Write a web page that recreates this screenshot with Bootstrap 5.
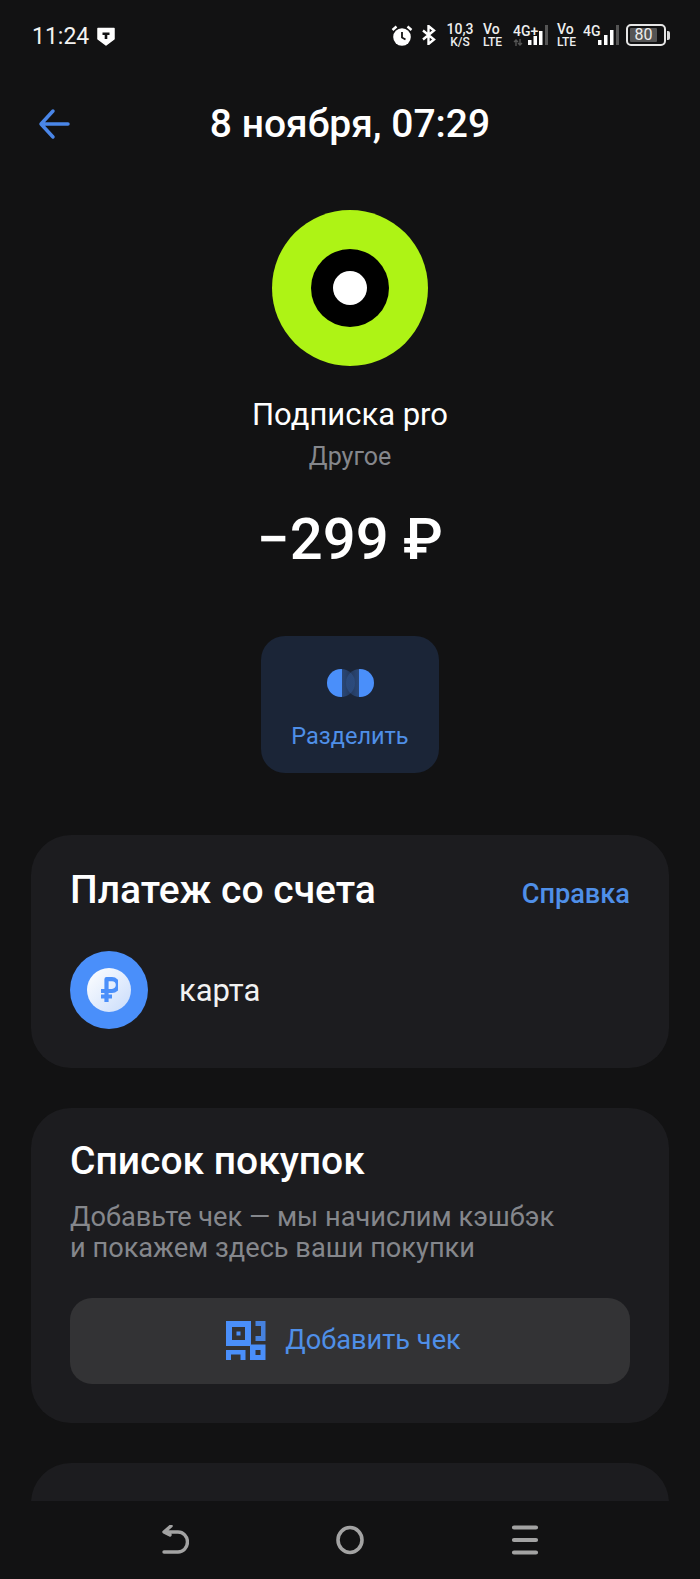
<!DOCTYPE html>
<html lang="ru">
<head>
    <meta charset="UTF-8">
    <meta name="viewport" content="width=device-width, initial-scale=1.0">
    <title>Операция</title>
    <link rel="stylesheet" href="https://cdn.jsdelivr.net/npm/bootstrap@5.3.0/dist/css/bootstrap.min.css">
    <style>
        html, body { height: 100%; }
        body {
            background: #121213;
            color: #fff;
            font-family: Roboto, "Noto Sans", sans-serif;
            overflow: hidden;
        }
        .screen { height: 1579px; }
        .scroll-area { height: 1501px; overflow: hidden; }

        .status-bar { height: 72px; padding: 0 30px 0 32px; }
        .status-time { font-size: 23px; line-height: 1; color: #f2f2f2; }
        .status-right { margin-bottom: 2px; }
        .net-speed { width: 30px; margin-left: 8px; text-align: center; font-weight: 500; color: #eee; }
        .net-volte { width: 22px; font-weight: 500; color: #eee; }
        .net-line1 { font-size: 14px; line-height: 14px; }
        .net-line2 { font-size: 12px; line-height: 12px; }
        .status-bar svg text { font-family: Roboto, sans-serif; font-weight: 500; font-size: 14px; fill: #eee; }
        .battery { width: 40px; height: 22px; border: 2px solid #e6e6e6; border-radius: 5px; padding: 2px; }
        .battery-fill { background: #555; border-radius: 1px; font-size: 16px; line-height: 14px; height: 14px; width: 27px; text-align: center; color: #eee; }
        .battery-cap { width: 3px; height: 9px; background: #ddd; border-radius: 0 2px 2px 0; margin-left: 1px; }

        .top-title { height: 104px; padding-left: 38px; }
        .top-title h1 { font-size: 39px; line-height: 46px; font-weight: 500; margin: 0; flex: 1; text-align: center; padding-right: 70px; }

        .logo-ring { width: 156px; height: 156px; border-radius: 50%; background: #aef315; margin-top: 34px; }
        .merchant { font-size: 31px; line-height: 36px; margin-top: 31px; }
        .category { font-size: 25px; line-height: 30px; color: #85878c; margin-top: 9px; }
        .amount { font-size: 58px; line-height: 64px; font-weight: 500; margin-top: 35px; }

        .split-btn { width: 178px; height: 137px; margin-top: 65px; background: #1b2537; border-radius: 24px; color: #4f8fe8; font-size: 23.500px; padding-top: 33px; }
        .split-btn span { margin-top: 25px; line-height: 28px; }

        .info-card { background: #1c1c1f; border-radius: 40px; margin: 0 31px 40px; padding: 31px 39px 39px; }
        .info-card h2 { font-size: 39px; line-height: 44px; font-weight: 500; margin: 0; }
        .help-link { font-size: 27.200px; font-weight: 500; color: #4f8fe8; text-decoration: none; margin-top: 8px; }
        .account-row { margin-top: 36px; }
        .account-ico { width: 78px; height: 78px; border-radius: 50%; background: #4a8ffa; }
        .coin { width: 44px; height: 44px; border-radius: 50%; background: linear-gradient(135deg, #fff, #c9dcfb); }
        .account-name { font-size: 31px; line-height: 36px; margin-left: 31px; padding-top: 2px; color: #f2f2f2; }
        .hint { font-size: 27.200px; line-height: 31px; color: #85878c; margin-top: 19px; }
        .check-btn { height: 86px; margin-top: 34px; padding-right: 25px; background: #333335; border: 0; border-radius: 22px; color: #4f8fe8; font-size: 27.200px; width: 100%; gap: 19px; }
        .bottom-nav { height: 78px; padding-top: 24px; color: #a3a3a3; }
        .bottom-nav svg { display: block; }
    </style>
</head>
<body>
<div class="screen d-flex flex-column">
    <div class="scroll-area">
        <div class="status-bar d-flex align-items-center justify-content-between">
            <div class="d-flex align-items-center gap-2">
                <span class="status-time">11:24</span>
                <svg width="18" height="19" viewBox="0 0 18 19"><path d="M1 1.500h16v10.500l-8 6-8-6z" fill="#fff" stroke="#fff" stroke-width="1.500" stroke-linejoin="round"/><path d="M5.500 5.500h7v2.500h-2.200v4h-2.600v-4h-2.200z" fill="#121213"/></svg>
            </div>
            <div class="status-right d-flex align-items-center">
                <svg width="22" height="21" viewBox="0 0 22 21"><circle cx="11" cy="12" r="8.800" fill="#fff"/><path d="M11 7v5.500l3.500 2" fill="none" stroke="#121213" stroke-width="1.800"/><path d="M1.500 5l4-3.500M20.500 5l-4-3.500" stroke="#fff" stroke-width="2.400"/></svg>
                <svg class="ms-2" width="16" height="20" viewBox="0 0 16 20"><path d="M2 5.500l11 9-5.500 4.500V1l5.500 4.500-11 9" fill="none" stroke="#fff" stroke-width="2.400"/></svg>
                <div class="net-speed"><div class="net-line1">10,3</div><div class="net-line2">K/S</div></div>
                <div class="net-volte ms-2"><div class="net-line1">Vo</div><div class="net-line2">LTE</div></div>
                <svg class="ms-2" width="38" height="22" viewBox="0 0 38 22"><text x="0" y="12">4G+</text><path d="M3 22v-6M1 18l2-2 2 2M7 15v6M5 19l2 2 2-2" fill="none" stroke="#555" stroke-width="1.400"/><rect x="15" y="16" width="3.500" height="5" fill="#fff"/><rect x="20.500" y="12" width="3.500" height="9" fill="#fff"/><rect x="26" y="7" width="3.500" height="14" fill="#fff"/><rect x="32" y="1" width="3" height="20" fill="#555"/></svg>
                <div class="net-volte" style="margin-left:6px"><div class="net-line1">Vo</div><div class="net-line2">LTE</div></div>
                <svg class="ms-1" width="36" height="22" viewBox="0 0 36 22"><text x="0" y="12">4G</text><rect x="15" y="16" width="3.500" height="5" fill="#fff"/><rect x="21" y="11" width="3.500" height="10" fill="#fff"/><rect x="27" y="6" width="3.500" height="15" fill="#fff"/><rect x="33" y="1" width="3" height="20" fill="#555"/></svg>
                <div class="d-flex align-items-center" style="margin-left:7px">
                    <div class="battery"><div class="battery-fill">80</div></div>
                    <div class="battery-cap"></div>
                </div>
            </div>
        </div>

        <div class="top-title d-flex align-items-center">
            <svg width="32" height="32" viewBox="0 0 32 32"><path d="M30 16H3M15 3L3 16l12 13" fill="none" stroke="#4a86e8" stroke-width="3.500" stroke-linecap="round" stroke-linejoin="round"/></svg>
            <h1>8 ноября, 07:29</h1>
        </div>

        <div class="d-flex flex-column align-items-center">
            <div class="logo-ring d-flex align-items-center justify-content-center">
                <svg width="78" height="78" viewBox="0 0 78 78"><circle cx="39" cy="39" r="39" fill="#000"/><circle cx="39" cy="39" r="17" fill="#fff"/></svg>
            </div>
            <div class="merchant">Подписка pro</div>
            <div class="category">Другое</div>
            <div class="amount">−299 ₽</div>
            <div class="split-btn d-flex flex-column align-items-center">
                <svg width="47" height="28" viewBox="0 0 47 28">
                    <defs>
                        <linearGradient id="splitL" x1="0" x2="1" y1="0" y2="0"><stop offset=".54" stop-color="#4a8ffa"/><stop offset=".55" stop-color="#4a8ffa" stop-opacity=".32"/><stop offset="1" stop-color="#4a8ffa" stop-opacity=".12"/></linearGradient>
                        <linearGradient id="splitR" x1="1" x2="0" y1="0" y2="0"><stop offset=".54" stop-color="#4a8ffa"/><stop offset=".55" stop-color="#4a8ffa" stop-opacity=".32"/><stop offset="1" stop-color="#4a8ffa" stop-opacity=".12"/></linearGradient>
                    </defs>
                    <circle cx="33" cy="14" r="14" fill="url(#splitR)"/>
                    <circle cx="14" cy="14" r="14" fill="url(#splitL)"/>
                </svg>
                <span>Разделить</span>
            </div>
        </div>

        <div class="info-card" style="margin-top:62px">
            <div class="d-flex align-items-center justify-content-between">
                <h2>Платеж со счета</h2>
                <a class="help-link" href="#">Справка</a>
            </div>
            <div class="account-row d-flex align-items-center">
                <div class="account-ico d-flex align-items-center justify-content-center">
                    <div class="coin d-flex align-items-center justify-content-center">
                        <svg width="18" height="26" viewBox="0 0 18 26"><path d="M6.500 25V2.200h5.500a5.900 5.900 0 0 1 0 11.800H1M1 19.500h11" fill="none" stroke="#4a8ffa" stroke-width="4.200" stroke-linejoin="round"/></svg>
                    </div>
                </div>
                <div class="account-name">карта</div>
            </div>
        </div>

        <div class="info-card">
            <h2>Список покупок</h2>
            <div class="hint">Добавьте чек — мы начислим кэшбэк<br>и покажем здесь ваши покупки</div>
            <button class="check-btn btn d-flex align-items-center justify-content-center" type="button">
                <svg width="40" height="40" viewBox="0 0 40 40" fill="#4a8ffa"><path fill-rule="evenodd" d="M0 0h25v25H0zM6 6v13h13V6zM10.500 10.500h4v4h-4z"/><path d="M29.500 0h10v20h-10v-5H35v-10h-5.500z" opacity=".85"/><path fill-rule="evenodd" d="M24 23.500h15.500V39H24zM29.500 29v5h5v-5z"/><path d="M0 29h19.500v10H14.500v-5.500H5V39H0z"/></svg>
                <span>Добавить чек</span>
            </button>
        </div>

        <div class="info-card" style="height:200px"></div>
    </div>

    <div class="bottom-nav d-flex justify-content-center">
        <div class="d-flex w-100 justify-content-between" style="padding:0 161px">
            <svg width="28" height="30" viewBox="0 0 28 30"><path d="M4 7h13a8.500 9 0 0 1 0 20H3M10 1L3 7l6 3" fill="none" stroke="currentColor" stroke-width="3.400" stroke-linecap="round" stroke-linejoin="round"/></svg>
            <svg width="28" height="30" viewBox="0 0 28 30"><ellipse cx="14" cy="15" rx="12" ry="12.500" fill="none" stroke="currentColor" stroke-width="3.600"/></svg>
            <svg width="28" height="30" viewBox="0 0 28 30"><path d="M3 2.500h22M3 15h22M3 27.500h22" stroke="currentColor" stroke-width="4.200" stroke-linecap="round"/></svg>
        </div>
    </div>
</div>
<script src="https://cdn.jsdelivr.net/npm/bootstrap@5.3.0/dist/js/bootstrap.bundle.min.js"></script>
</body>
</html>
